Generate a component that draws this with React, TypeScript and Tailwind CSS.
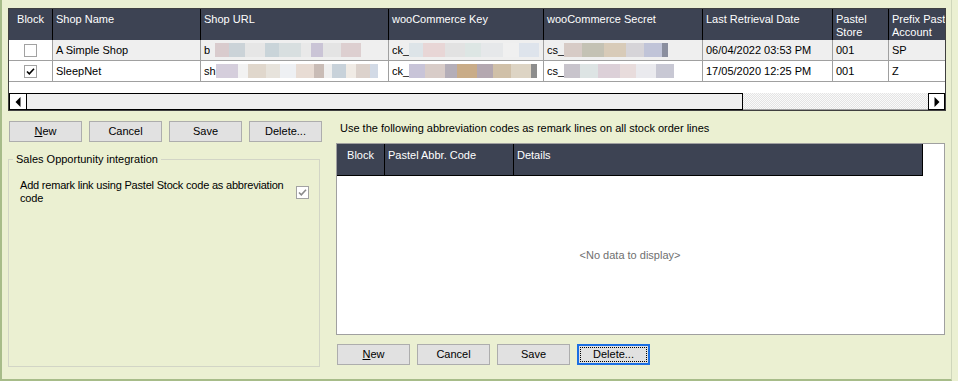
import React from "react";

type Seg = [number, string];

const HEAD = "bg-[#3d4353]";

const topCols = [
  { key: "block", label: "Block", w: "w-[44px]", center: true },
  { key: "name", label: "Shop Name", w: "w-[148px]" },
  { key: "url", label: "Shop URL", w: "w-[188px]" },
  { key: "key", label: "wooCommerce Key", w: "w-[155px]" },
  { key: "secret", label: "wooCommerce Secret", w: "w-[159px]" },
  { key: "date", label: "Last Retrieval Date", w: "w-[130px]" },
  { key: "store", label: "Pastel\nStore", w: "w-[56px]" },
  { key: "prefix", label: "Prefix Pastel\nAccount", w: "w-[56px]", last: true },
];

const shops = [
  {
    blocked: false,
    name: "A Simple Shop",
    url: { pre: "b", segs: [[5, "#efefef"], [14, "#d9cbcd"], [16, "#cbd3d8"], [20, "#e6e6e6"], [14, "#c9d4d9"], [22, "#d8dfe0"], [10, "#e9e9e9"], [12, "#cac4d6"], [18, "#e4e4e4"], [20, "#ddcfd0"]] as Seg[] },
    key: { pre: "ck_", segs: [[14, "#dde4e8"], [22, "#e8d6d6"], [20, "#e2e2e2"], [16, "#dde6e4"], [22, "#e6e8ea"], [16, "#f0f0f0"], [20, "#dee4ec"]] as Seg[] },
    secret: { pre: "cs_", segs: [[18, "#d7cbc6"], [22, "#c4c2b4"], [22, "#d8cbb8"], [18, "#d6d4d8"], [18, "#c0c4d8"], [6, "#8a8e9e"]] as Seg[] },
    date: "06/04/2022 03:53 PM",
    store: "001",
    prefix: "SP",
  },
  {
    blocked: true,
    name: "SleepNet",
    url: { pre: "sh", segs: [[22, "#d5cedc"], [10, "#f2f2f2"], [18, "#e0d7cc"], [14, "#e7e3dc"], [16, "#eef0f3"], [18, "#e8dcd4"], [10, "#c9bcb6"], [8, "#efefef"], [14, "#c8d2da"], [10, "#f0ebe5"], [14, "#dcd2cc"], [8, "#d2dae6"]] as Seg[] },
    key: { pre: "ck_", segs: [[16, "#c8c4d8"], [20, "#d8ccc8"], [12, "#b4aeb8"], [20, "#c9ac88"], [16, "#b4a8b0"], [18, "#d0c0a8"], [20, "#ddd4c4"], [6, "#8d8d8d"]] as Seg[] },
    secret: { pre: "cs_", segs: [[16, "#c8c4cc"], [18, "#dde4e4"], [22, "#dcd0d8"], [16, "#e8dcdc"], [20, "#eaeaee"], [18, "#c8c8d4"]] as Seg[] },
    date: "17/05/2020 12:25 PM",
    store: "001",
    prefix: "Z",
  },
];

function Check({ on, gray }: { on: boolean; gray?: boolean }) {
  return (
    <div className="w-[13px] h-[13px] border border-[#a2a2a2] bg-white flex items-center justify-center">
      {on && (
        <svg width="11" height="11" viewBox="0 0 11 11">
          <path d="M2 5.5 L4.3 7.8 L9 2.8" fill="none" stroke={gray ? "#8a8a8a" : "#000"} strokeWidth="1.6" />
        </svg>
      )}
    </div>
  );
}

function Blur({ pre, segs }: { pre: string; segs: Seg[] }) {
  return (
    <div className="flex items-center overflow-hidden whitespace-nowrap">
      <span>{pre}</span>
      {segs.map(([w, c], i) => (
        <span key={i} className="inline-block h-[14px] shrink-0" style={{ width: w, background: c }} />
      ))}
    </div>
  );
}

function Btn({ label, u, focused }: { label: string; u?: boolean; focused?: boolean }) {
  const text = u ? (
    <span>
      <span className="underline">{label[0]}</span>
      {label.slice(1)}
    </span>
  ) : (
    <span>{label}</span>
  );
  if (focused) {
    return (
      <div className="w-[73px] h-[21px] border-2 border-[#1c6fe3] bg-[#e1e1e1] p-px flex">
        <div className="flex-1 border border-dotted border-black flex items-center justify-center">{text}</div>
      </div>
    );
  }
  return (
    <div className="w-[73px] h-[21px] border border-[#adadad] bg-[#e1e1e1] flex items-center justify-center">{text}</div>
  );
}

function Arrow({ dir }: { dir: "l" | "r" }) {
  return (
    <svg width="6" height="10" viewBox="0 0 6 10">
      <path d={dir === "l" ? "M5.5 0 L0.5 5 L5.5 10 Z" : "M0.5 0 L5.5 5 L0.5 10 Z"} fill="#000" />
    </svg>
  );
}

export default function App() {
  return (
    <div className="w-[958px] h-[381px] bg-[#ebf0d2] font-['Liberation_Sans',Arial,sans-serif] text-[11px] leading-[13px] text-black overflow-hidden">
      <div className="w-[952px] h-[381px] border-l-2 border-b-2 border-[#a7bc89] border-r border-r-[#cfd6bb] pl-[6px] pt-[8px]">
        {/* Shops grid */}
        <div className="w-[938px] border border-[#404040] bg-white flex flex-col">
          <div className={`flex h-[31px] ${HEAD} text-white`}>
            {topCols.map((c) => (
              <div
                key={c.key}
                className={`${c.w} shrink-0 pt-[4px] whitespace-pre overflow-hidden ${c.center ? "text-center" : "pl-[3px]"} ${c.last ? "" : "border-r border-black"}`}
              >
                {c.label}
              </div>
            ))}
          </div>
          {shops.map((s, i) => (
            <div key={s.name} className={`flex h-[21px] border-b border-[#a0a0a0] ${i === 0 ? "bg-[#efefef]" : "bg-white"}`}>
              <div className="w-[44px] shrink-0 border-r border-[#a0a0a0] bg-white flex items-center justify-center">
                <Check on={s.blocked} />
              </div>
              <div className="w-[148px] shrink-0 border-r border-[#a0a0a0] pl-[3px] flex items-center">{s.name}</div>
              <div className="w-[188px] shrink-0 border-r border-[#a0a0a0] pl-[3px] flex items-center overflow-hidden">
                <Blur pre={s.url.pre} segs={s.url.segs} />
              </div>
              <div className="w-[155px] shrink-0 border-r border-[#a0a0a0] pl-[3px] flex items-center overflow-hidden">
                <Blur pre={s.key.pre} segs={s.key.segs} />
              </div>
              <div className="w-[159px] shrink-0 border-r border-[#a0a0a0] pl-[3px] flex items-center overflow-hidden">
                <Blur pre={s.secret.pre} segs={s.secret.segs} />
              </div>
              <div className="w-[130px] shrink-0 border-r border-[#a0a0a0] pl-[3px] flex items-center">{s.date}</div>
              <div className="w-[56px] shrink-0 border-r border-[#a0a0a0] pl-[3px] flex items-center">{s.store}</div>
              <div className="w-[56px] shrink-0 pl-[3px] flex items-center">{s.prefix}</div>
            </div>
          ))}
          <div className="h-[11px] bg-white" />
          {/* horizontal scrollbar */}
          <div className="flex h-[17px]">
            <div className="w-[18px] border border-black bg-white flex items-center justify-center">
              <Arrow dir="l" />
            </div>
            <div className="w-[716px] border-y border-r border-black bg-[#efefef]" />
            <div className="flex-1 border-b border-[#a0a0a0] bg-[repeating-conic-gradient(#e4e4e4_0%_25%,#fafafa_0%_50%)] bg-[length:2px_2px]" />
            <div className="w-[17px] border border-black bg-white flex items-center justify-center">
              <Arrow dir="r" />
            </div>
          </div>
        </div>

        <div className="flex gap-[14px] mt-[10px]">
          {/* left column */}
          <div className="w-[314px] flex flex-col">
            <div className="flex gap-[7px] ml-px">
              <Btn label="New" u />
              <Btn label="Cancel" />
              <Btn label="Save" />
              <Btn label="Delete..." />
            </div>
            <fieldset className="mt-[11px] w-[312px] h-[214px] border border-[#d2d5c6] px-0">
              <legend className="ml-[4px] px-[3px] text-black">Sales Opportunity integration</legend>
              <div className="flex items-center pl-[11px] pt-[13px]">
                <div className="w-[276px] whitespace-nowrap tracking-[-0.2px]">
                  Add remark link using Pastel Stock code as abbreviation
                  <br />
                  code
                </div>
                <Check on gray />
              </div>
            </fieldset>
          </div>

          {/* right column */}
          <div className="w-[609px] flex flex-col">
            <div className="pl-[4px] mt-px">Use the following abbreviation codes as remark lines on all stock order lines</div>
            <div className="mt-[8px] h-[192px] border border-[#a0a0a0] bg-white flex flex-col">
              <div className={`w-[586px] h-[32px] ${HEAD} text-white flex border-b border-r border-black`}>
                <div className="w-[48px] border-r border-black text-center pt-[5px]">Block</div>
                <div className="w-[129px] border-r border-black pl-[3px] pt-[5px]">Pastel Abbr. Code</div>
                <div className="flex-1 pl-[3px] pt-[5px]">Details</div>
              </div>
              <div className="w-[586px] flex-1 flex items-center justify-center text-[#6f6f6f]">&lt;No data to display&gt;</div>
            </div>
            <div className="flex gap-[7px] ml-px mt-[9px]">
              <Btn label="New" u />
              <Btn label="Cancel" />
              <Btn label="Save" />
              <Btn label="Delete..." focused />
            </div>
          </div>
        </div>
      </div>
    </div>
  );
}
